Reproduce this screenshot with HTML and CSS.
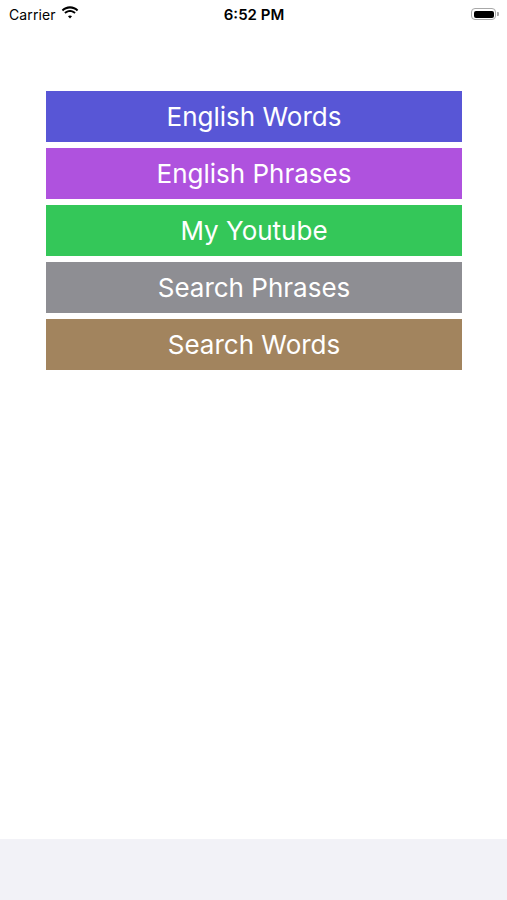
FILE: index.html
```html
<!DOCTYPE html>
<html lang="en">

<head>
    <meta charset="UTF-8">
    <meta name="viewport" content="width=device-width, initial-scale=1.0">
    <title>English</title>
    <link rel="stylesheet" href="styles.css">
</head>

<body>
    <div class="status-bar">
        <div class="carrier">
            Carrier
            <svg class="wifi" width="18" height="13" viewBox="0 0 17 12">
                <path d="M8.5 2.2c2.5 0 4.8 1 6.5 2.6l1.3-1.4C14.3 1.4 11.5.2 8.5.2S2.7 1.4.7 3.4L2 4.8c1.7-1.6 4-2.6 6.5-2.6z" fill="#000"/>
                <path d="M8.5 5.6c1.6 0 3 .6 4.1 1.6l1.3-1.4c-1.4-1.3-3.3-2.2-5.4-2.2s-4 .9-5.4 2.2l1.3 1.4c1.1-1 2.5-1.6 4.1-1.6z" fill="#000"/>
                <path d="M8.5 8.8c.8 0 1.4.3 1.9.7L8.5 11.6 6.6 9.5c.5-.4 1.1-.7 1.9-.7z" fill="#000"/>
            </svg>
        </div>
        <div class="time">6:52 PM</div>
        <div class="battery">
            <span class="battery-body"><span class="battery-level"></span></span>
            <span class="battery-cap"></span>
        </div>
    </div>

    <div class="menu">
        <button class="menu-button words">English Words</button>
        <button class="menu-button phrases">English Phrases</button>
        <button class="menu-button youtube">My Youtube</button>
        <button class="menu-button search-phrases">Search Phrases</button>
        <button class="menu-button search-words">Search Words</button>
    </div>

    <div class="tab-bar"></div>
</body>

</html>
```

FILE: styles.css
```css
body {
    margin: 0;
    width: 507px;
    height: 900px;
    background: #fff;
    font-family: 'Inter', 'Roboto', sans-serif;
    display: flex;
    flex-direction: column;
    overflow: hidden;
}

.status-bar {
    height: 28px;
    display: flex;
    align-items: center;
    justify-content: space-between;
    padding: 0 8px 0 9px;
    font-size: 14px;
    color: #000;
}

.carrier {
    width: 120px;
    display: flex;
    align-items: center;
    gap: 5px;
    letter-spacing: 0.1px;
}

.wifi {
    margin-top: -3px;
}

.time {
    font-weight: 600;
    font-size: 15px;
}

.battery {
    width: 120px;
    display: flex;
    justify-content: flex-end;
    align-items: center;
}

.battery-body {
    width: 25px;
    height: 12px;
    border: 1px solid #a8a8a8;
    border-radius: 4px;
    padding: 1.5px;
    box-sizing: border-box;
    display: flex;
}

.battery-level {
    flex: 1;
    background: #000;
    border-radius: 2px;
}

.battery-cap {
    width: 1.5px;
    height: 4px;
    margin-left: 1px;
    background: #a8a8a8;
    border-radius: 0 1px 1px 0;
}

.menu {
    margin: 63px 45px 0 46px;
    display: flex;
    flex-direction: column;
    gap: 6px;
}

.menu-button {
    height: 51px;
    border: none;
    border-radius: 0;
    color: #fff;
    font-family: 'Inter', 'Roboto', sans-serif;
    font-size: 26px;
    font-weight: 400;
    cursor: pointer;
    padding: 0;
}

.words {
    background: #5856d6;
}

.phrases {
    background: #af52de;
}

.youtube {
    background: #34c759;
}

.search-phrases {
    background: #8e8e93;
}

.search-words {
    background: #a2845e;
}

.tab-bar {
    margin-top: auto;
    height: 61px;
    background: #f2f2f7;
}
```
